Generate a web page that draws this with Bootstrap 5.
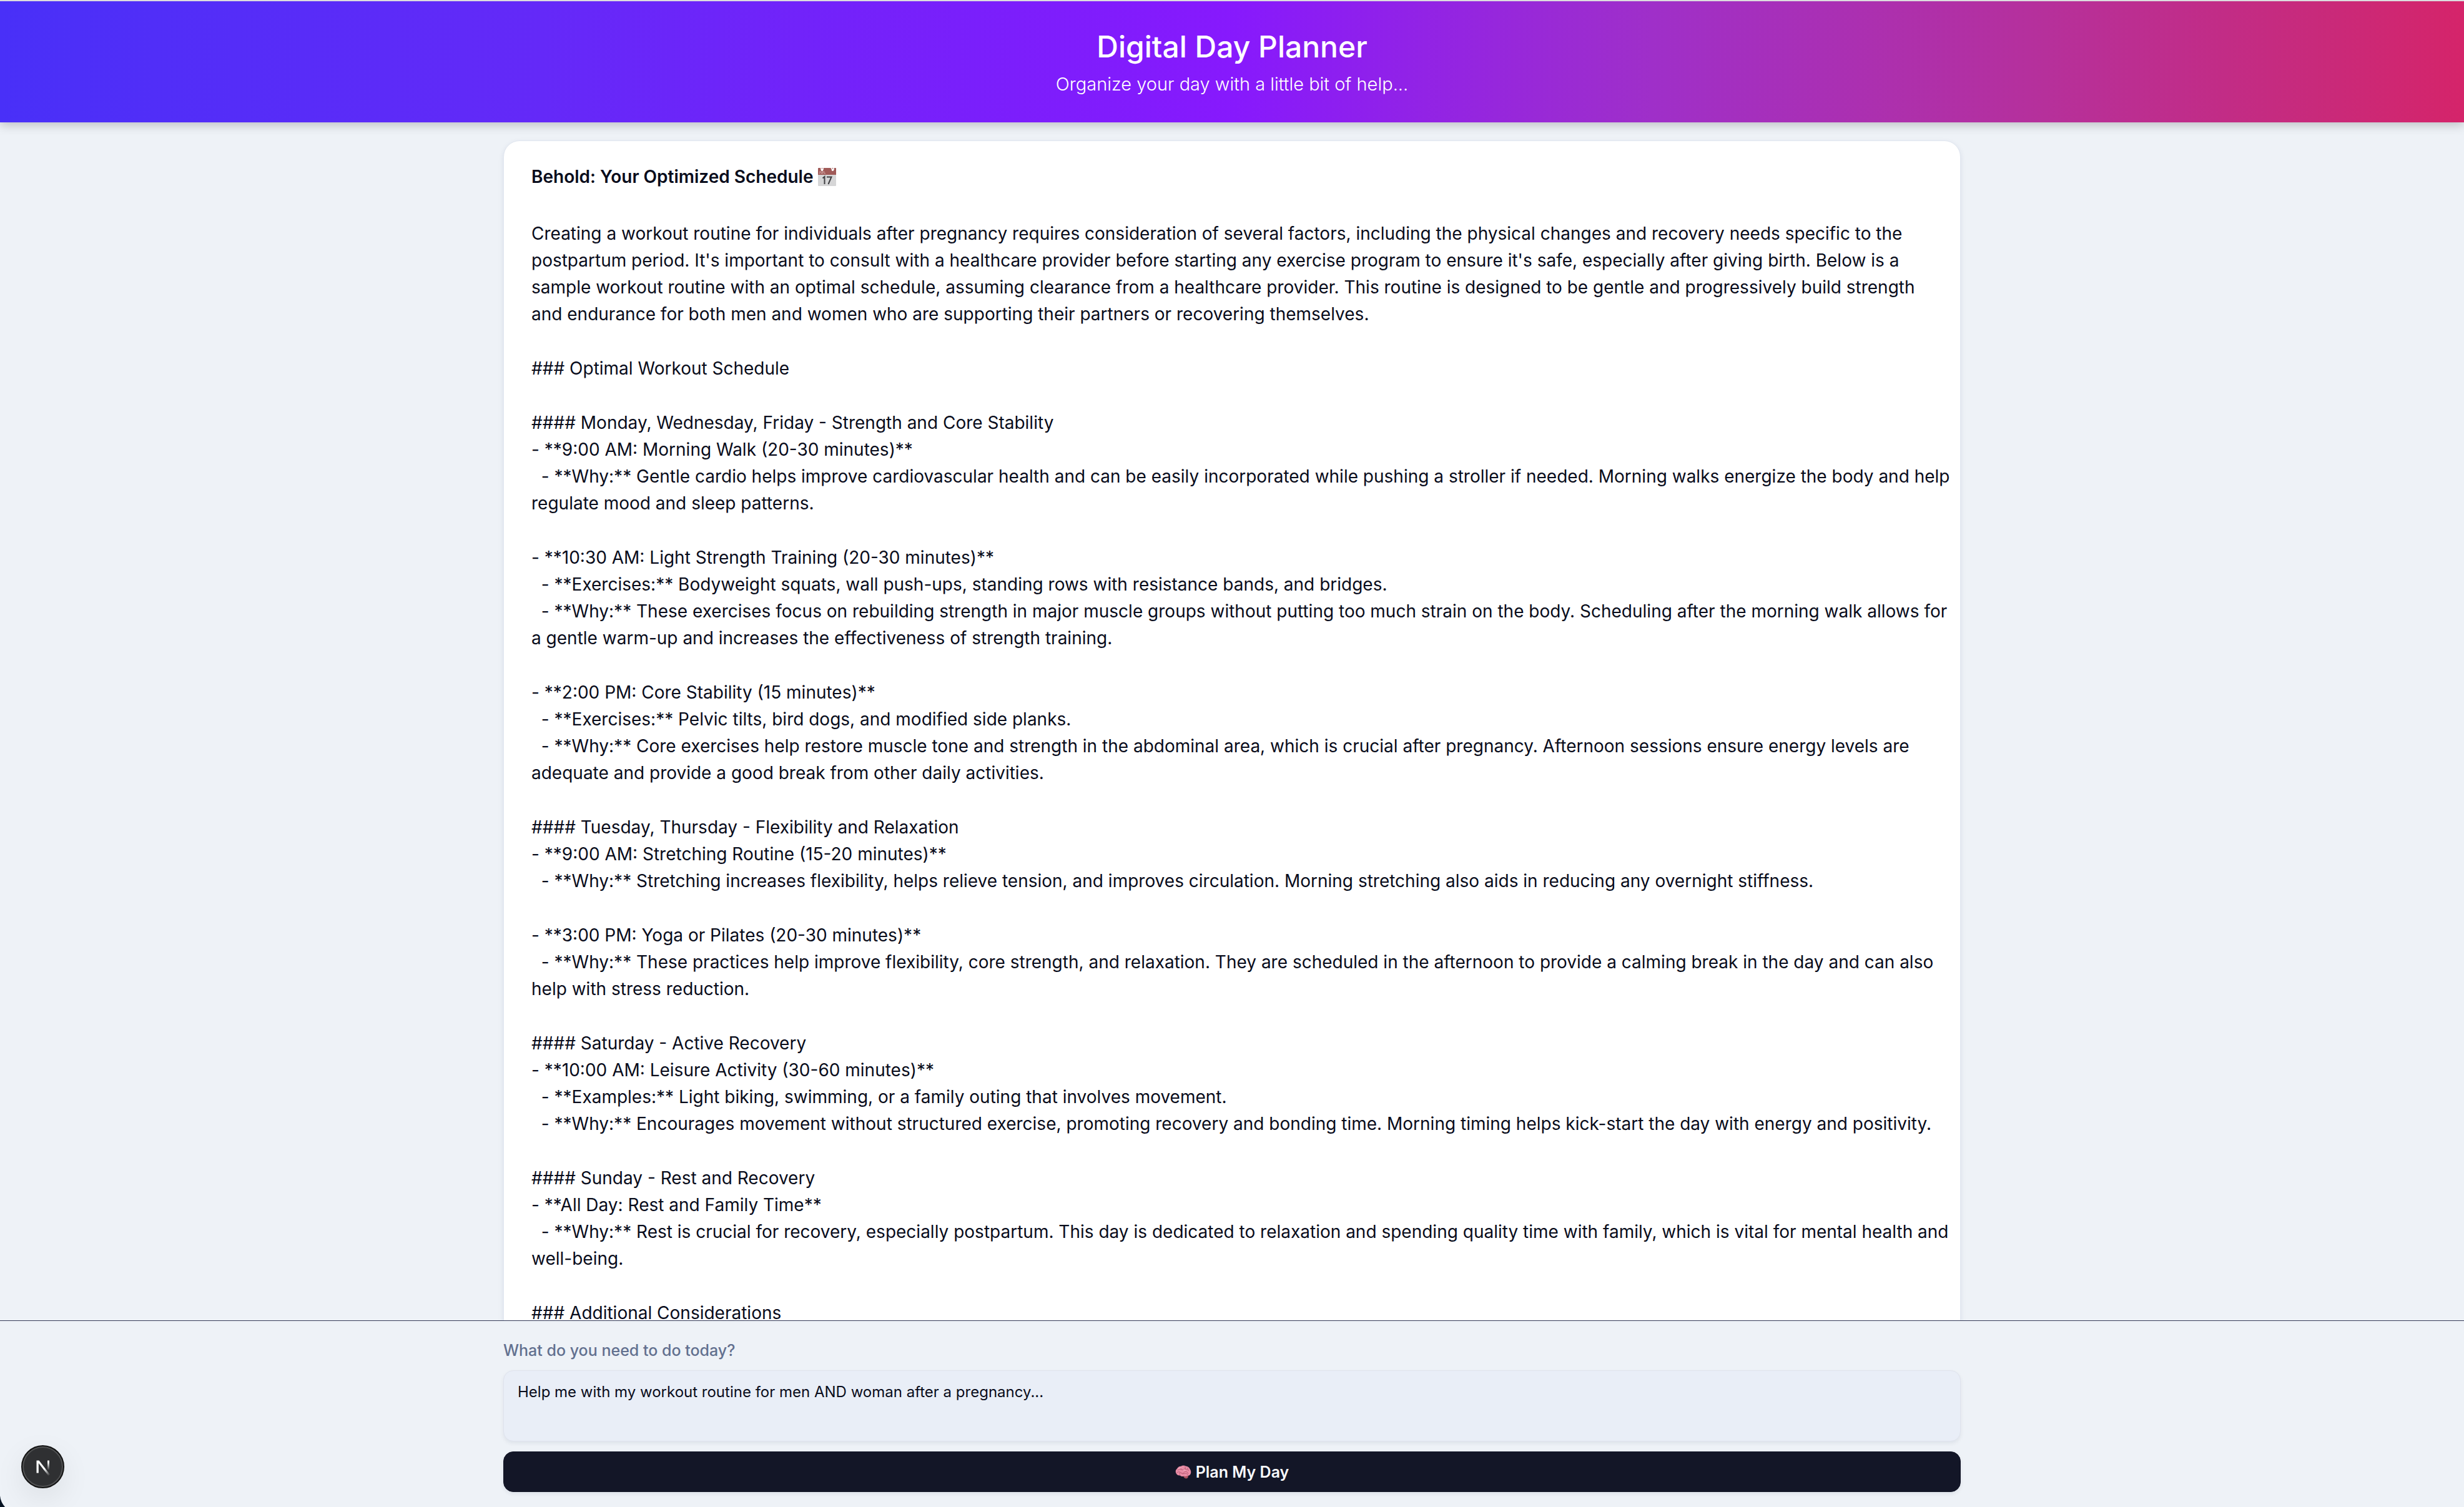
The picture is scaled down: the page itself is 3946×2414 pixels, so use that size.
<!DOCTYPE html>
<html lang="en">
<head>
<meta charset="utf-8">
<meta name="viewport" content="width=device-width, initial-scale=1">
<title>Digital Day Planner</title>
<link href="https://cdn.jsdelivr.net/npm/bootstrap@5.3.0/dist/css/bootstrap.min.css" rel="stylesheet">
<style>
  body { font-family: Inter, "Liberation Sans", sans-serif; background: #eef2f7; color: #090c1b; }
  .page-col { width: 100%; max-width: 2334px; }

  .planner-header {
    border-top: 2px solid #dcdcde;
    padding: 45px 0 40px;
    background: linear-gradient(90deg, #4930f8 0%, #6429f8 22%, #8719fd 50%, #9f2fc9 67%, #b6309b 83%, #c82a7b 94%, #d5246a 100%);
    box-shadow: 0 4px 16px rgba(0, 0, 0, .22);
    z-index: 1;
  }
  .planner-title { font-size: 48px; font-weight: 500; line-height: 56px; margin-bottom: 11px; }
  .planner-tagline { font-size: 29px; font-weight: 300; line-height: 42px; }

  .schedule { padding-top: 29px; }
  .schedule-card {
    --bs-card-border-color: #e1e6f0;
    --bs-card-border-radius: 26px;
    box-shadow: 0 3px 8px rgba(30, 50, 110, .1);
    color: inherit;
  }
  .schedule-card .card-body { padding: 36px 8px 36px 44px; font-size: 28px; line-height: 43px; }
  .schedule-title { font-size: 28px; font-weight: 600; line-height: 43px; margin-bottom: 48px; gap: 8px; }
  .schedule-text p { white-space: pre-wrap; margin-bottom: 44px; }

  .ask-bar { background: #eef2f7; border-top: 1px solid #353b58; padding: 29px 0 24px; z-index: 1; }
  .ask-label { font-size: 25px; font-weight: 500; line-height: 36px; margin-bottom: 14px; color: #62708f; }
  .ask-input {
    height: 114px; padding: 16px 22px; resize: none;
    font-size: 24px; line-height: 36px; color: #090c1b;
    background: #e9eef7; border: 1px solid #dfe3ed; border-radius: 16px;
    box-shadow: 0 3px 6px rgba(20, 30, 60, .07);
  }
  .ask-button {
    --bs-btn-bg: #131627; --bs-btn-color: #f8fafc; --bs-btn-border-color: #131627;
    --bs-btn-hover-bg: #23273c; --bs-btn-hover-color: #fff;
    height: 65px; margin-top: 16px; gap: 7px;
    font-size: 25px; font-weight: 600; line-height: 36px; border-radius: 16px;
    box-shadow: 0 3px 6px rgba(20, 30, 60, .07);
  }

  .dev-badge {
    left: 34px; bottom: 30px; width: 69px; height: 69px; z-index: 3;
    border: 2px solid #141414; background: #2f3032;
    box-shadow: inset 0 0 0 2px #515253, 0 16px 48px rgba(0, 0, 0, .08);
  }
  .window-corner { left: 0; bottom: 0; z-index: 2; }
</style>
</head>
<body class="vh-100 d-flex flex-column overflow-hidden">

<header class="planner-header position-relative text-center text-white flex-shrink-0">
  <h1 class="planner-title">Digital Day Planner</h1>
  <p class="planner-tagline mb-0">Organize your day with a little bit of help...</p>
</header>

<main class="schedule flex-grow-1 overflow-hidden">
  <div class="page-col mx-auto">
    <article class="card schedule-card">
      <div class="card-body">
        <h2 class="schedule-title d-flex align-items-center">Behold: Your Optimized Schedule
          <svg width="29" height="29" viewBox="0 0 29 29" role="img" aria-label="Calendar">
            <rect width="29" height="29" rx="1" fill="#d6d6d7"/>
            <path d="M0 1Q0 0 1 0H28Q29 0 29 1V11H0Z" fill="#a05a58"/>
            <path d="M5 0V2.500M8 0V3M21 0L23.500 3M25 0V3" stroke="#fff" stroke-width="1.500"/>
            <circle cx="6.500" cy="3" r="1.900" fill="#fff"/><circle cx="23.500" cy="3" r="1.900" fill="#fff"/>
            <path d="M3 5V8.500H1.500M5 5V8.500H7.500V5M9.500 5V8.500H12" fill="none" stroke="#d3a9a8" stroke-width="1"/>
            <path d="M7.500 16.500L10.500 14V26M14 14.500H21.500L16.500 26" fill="none" stroke="#3f3f42" stroke-width="2"/>
          </svg>
        </h2>
        <div class="schedule-text">
<p>Creating a workout routine for individuals after pregnancy requires consideration of several factors, including the physical changes and recovery needs specific to the
postpartum period. It's important to consult with a healthcare provider before starting any exercise program to ensure it's safe, especially after giving birth. Below is a
sample workout routine with an optimal schedule, assuming clearance from a healthcare provider. This routine is designed to be gentle and progressively build strength
and endurance for both men and women who are supporting their partners or recovering themselves.</p>
<p>### Optimal Workout Schedule</p>
<p>#### Monday, Wednesday, Friday - Strength and Core Stability
- **9:00 AM: Morning Walk (20-30 minutes)**
  - **Why:** Gentle cardio helps improve cardiovascular health and can be easily incorporated while pushing a stroller if needed. Morning walks energize the body and help
regulate mood and sleep patterns.</p>
<p>- **10:30 AM: Light Strength Training (20-30 minutes)**
  - **Exercises:** Bodyweight squats, wall push-ups, standing rows with resistance bands, and bridges.
  - **Why:** These exercises focus on rebuilding strength in major muscle groups without putting too much strain on the body. Scheduling after the morning walk allows for
a gentle warm-up and increases the effectiveness of strength training.</p>
<p>- **2:00 PM: Core Stability (15 minutes)**
  - **Exercises:** Pelvic tilts, bird dogs, and modified side planks.
  - **Why:** Core exercises help restore muscle tone and strength in the abdominal area, which is crucial after pregnancy. Afternoon sessions ensure energy levels are
adequate and provide a good break from other daily activities.</p>
<p>#### Tuesday, Thursday - Flexibility and Relaxation
- **9:00 AM: Stretching Routine (15-20 minutes)**
  - **Why:** Stretching increases flexibility, helps relieve tension, and improves circulation. Morning stretching also aids in reducing any overnight stiffness.</p>
<p>- **3:00 PM: Yoga or Pilates (20-30 minutes)**
  - **Why:** These practices help improve flexibility, core strength, and relaxation. They are scheduled in the afternoon to provide a calming break in the day and can also
help with stress reduction.</p>
<p>#### Saturday - Active Recovery
- **10:00 AM: Leisure Activity (30-60 minutes)**
  - **Examples:** Light biking, swimming, or a family outing that involves movement.
  - **Why:** Encourages movement without structured exercise, promoting recovery and bonding time. Morning timing helps kick-start the day with energy and positivity.</p>
<p>#### Sunday - Rest and Recovery
- **All Day: Rest and Family Time**
  - **Why:** Rest is crucial for recovery, especially postpartum. This day is dedicated to relaxation and spending quality time with family, which is vital for mental health and
well-being.</p>
<p>### Additional Considerations</p>
        </div>
      </div>
    </article>
  </div>
</main>

<footer class="ask-bar position-relative flex-shrink-0">
  <form class="page-col mx-auto d-flex flex-column" onsubmit="return false">
    <label class="ask-label" for="tasks">What do you need to do today?</label>
    <textarea class="form-control ask-input" id="tasks">Help me with my workout routine for men AND woman after a pregnancy...</textarea>
    <button type="submit" class="btn ask-button w-100 d-flex align-items-center justify-content-center">
      <svg width="26" height="22" viewBox="0 0 26 22" aria-hidden="true">
        <path d="M13 15Q19 14 21 17Q21 21 17.500 21.500Q14 21 13 17Z" fill="#a8505f"/>
        <path d="M1 12Q0 8 3 5.500Q5 2 9 1.800Q13 -.5 17 1.500Q22 2 23.500 6Q26 9 25 13Q24 17 19.500 17Q17 18.500 14 17.500Q10 19 8 16.500Q3 17 1 12Z" fill="#e88da6"/>
        <path d="M4 8Q7 5 10 7T16 5M2.500 12Q6 9 9 12T16 10M10 2.500Q8 4 10 7M15 2Q18 4 16 7Q20 6 22 9M16 10Q20 10 21 14M9 12Q11 15 15 13.500T20 16M7 15.500Q8 14 7 12M20 4Q19 6 21 7.500" fill="none" stroke="#bd5f79" stroke-width="1"/>
        <path d="M5 6Q8 3 11 4M13 8Q15 7 17 8.500" fill="none" stroke="#f8bccb" stroke-width="1"/>
      </svg>
      Plan My Day
    </button>
  </form>
</footer>

<button type="button" class="dev-badge position-fixed rounded-circle p-0 d-flex align-items-center justify-content-center" aria-label="Open developer tools">
  <svg width="40" height="40" viewBox="0 0 40 40" aria-hidden="true">
    <defs>
      <linearGradient id="fadeStem" x1="0" y1="9" x2="0" y2="25" gradientUnits="userSpaceOnUse"><stop offset=".2" stop-color="#fff"/><stop offset="1" stop-color="#fff" stop-opacity="0"/></linearGradient>
      <linearGradient id="fadeDiag" x1="22" y1="23" x2="30" y2="34" gradientUnits="userSpaceOnUse"><stop offset="0" stop-color="#fff"/><stop offset="1" stop-color="#fff" stop-opacity="0"/></linearGradient>
    </defs>
    <rect x="27" y="9.500" width="3" height="15" fill="url(#fadeStem)"/>
    <path d="M9.500 9.500H13.500L31 32L28.500 34L12.800 13.800V29.500H9.500Z" fill="url(#fadeDiag)"/>
  </svg>
</button>

<svg class="window-corner position-fixed" width="8" height="18" viewBox="0 0 8 18" aria-hidden="true"><path d="M0 0Q1 10 8 18H0Z" fill="#061322"/></svg>

<script src="https://cdn.jsdelivr.net/npm/bootstrap@5.3.0/dist/js/bootstrap.bundle.min.js"></script>
</body>
</html>
